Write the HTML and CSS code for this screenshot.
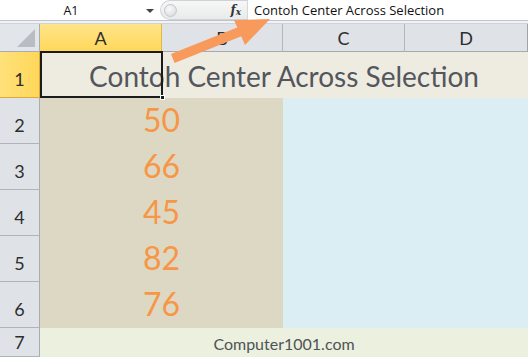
FILE: index.html
```html
<!DOCTYPE html>
<html>
<head>
<meta charset="utf-8">
<link rel="stylesheet" href="styles.css">
</head>
<body>
<div class="app">
  <div class="formula-bar">
    <div class="namebox">A1</div>
    <div class="dropdown"><span class="tri"></span></div>
    <div class="fx-area">
      <span class="knob"></span>
      <span class="fx">f<sub>x</sub></span>
    </div>
    <div class="formula-input">Contoh Center Across Selection</div>
  </div>
  <div class="bar-gap"></div>
  <div class="sheet">
    <div class="corner"><span class="corner-tri"></span></div>
    <div class="colhead sel">A</div>
    <div class="colhead">B</div>
    <div class="colhead">C</div>
    <div class="colhead last">D</div>

    <div class="rowhead sel r1">1</div>
    <div class="title">Contoh Center Across Selection</div>

    <div class="rowhead r2">2</div>
    <div class="num r2">50</div>
    <div class="rowhead r3">3</div>
    <div class="num r3">66</div>
    <div class="rowhead r4">4</div>
    <div class="num r4">45</div>
    <div class="rowhead r5">5</div>
    <div class="num r5">82</div>
    <div class="rowhead r6">6</div>
    <div class="num r6">76</div>
    <div class="blue"></div>

    <div class="rowhead r7">7</div>
    <div class="footer">Computer1001.com</div>

    <div class="selection"><span class="handle"></span></div>
  </div>
  <svg class="arrow" width="528" height="357" viewBox="0 0 528 357">
    <polygon points="171,54 241,26 244.5,35 174.5,63" fill="#f79a5c"/>
    <polygon points="270,19 234,20 245,45" fill="#f79a5c"/>
  </svg>
</div>
</body>
</html>
```
FILE: styles.css
```css
* { box-sizing: border-box; }
html, body { margin: 0; padding: 0; }
body { width: 528px; height: 357px; overflow: hidden; background: #fff; font-family: Lato, "Noto Sans", sans-serif; }
.app { position: relative; width: 528px; height: 357px; }

.formula-bar { display: flex; height: 20px; background: #fff; font-family: "Open Sans", "Noto Sans", sans-serif; font-size: 13px; color: #111; }
.namebox { width: 142px; display: flex; align-items: center; justify-content: center; font-size: 12.5px; }
.dropdown { width: 16px; display: flex; align-items: center; justify-content: center; }
.tri { width: 0; height: 0; border-left: 4px solid transparent; border-right: 4px solid transparent; border-top: 4px solid #444; margin-top: 1px; }
.fx-area { width: 87px; margin-left: 2px; display: flex; align-items: center; justify-content: space-between; background: linear-gradient(#f7f7f7, #e9eaeb); border: 1px solid #d0d3d6; border-right: none; border-radius: 10px 0 0 10px; padding: 0 6px 0 3px; }
.knob { width: 13px; height: 13px; border-radius: 50%; background: radial-gradient(circle at 40% 35%, #fafafa, #d4d6d8); border: 1px solid #c4c6c9; }
.fx { font-family: "DejaVu Serif", "Liberation Serif", serif; font-style: italic; font-weight: bold; font-size: 12px; color: #333; }
.fx sub { font-size: 9px; vertical-align: -1px; }
.formula-input { flex: 1; display: flex; align-items: center; padding-left: 6px; border-left: 1px solid #d5d8db; }

.bar-gap { height: 4px; border-top: 1px solid #bfc4ca; background: #f1f2f4; border-bottom: 1px solid #cfd3d8; }

.sheet { position: relative; display: grid; grid-template-columns: 40px 122px 121px 122px 123px; grid-template-rows: 28px repeat(6, 46px) 29px; }

.corner { background: #e2e5e9; border-right: 1px solid #a9adb2; border-bottom: 1px solid #a9adb2; position: relative; }
.corner-tri { position: absolute; right: 4px; bottom: 4px; width: 0; height: 0; border-left: 18px solid transparent; border-bottom: 18px solid #b8bdc3; }

.colhead { background: #dfe3e8; border-right: 1px solid #b3b7bc; border-bottom: 1px solid #a6aaaf; display: flex; align-items: center; justify-content: center; font-size: 18px; color: #2e2e2e; padding-top: 1px; }
.colhead.last { border-right: 1px solid #a0a4a9; }
.colhead.sel { background: linear-gradient(#ffe58a, #ffd75a); border-right: 1px solid #e3b64a; border-bottom: 1px solid #e0a93a; }

.rowhead { grid-column: 1; background: #dfe3e8; border-right: 1px solid #a9adb2; border-bottom: 1px solid #b0b4b9; display: flex; align-items: flex-end; justify-content: center; font-size: 18px; color: #2e2e2e; padding-bottom: 7px; }
.rowhead.sel { background: linear-gradient(90deg, #ffe17a, #ffd75a); border-right: 1px solid #d9a63a; border-bottom: 1px solid #e0a93a; }
.rowhead.r7 { padding-bottom: 3px; }

.r1 { grid-row: 2; }
.r2 { grid-row: 3; }
.r3 { grid-row: 4; }
.r4 { grid-row: 5; }
.r5 { grid-row: 6; }
.r6 { grid-row: 7; }
.r7 { grid-row: 8; }

.title { grid-column: 2 / span 4; grid-row: 2; background: #eeece1; display: flex; align-items: flex-end; justify-content: center; font-size: 28px; color: #53575d; padding-bottom: 5px; }

.num { grid-column: 2 / span 2; background: #ddd8c4; display: flex; align-items: flex-end; justify-content: center; font-size: 32px; color: #f79646; line-height: 1; padding-bottom: 8px; }

.blue { grid-column: 4 / span 2; grid-row: 3 / span 5; background: #daeef3; }

.footer { grid-column: 2 / span 4; grid-row: 8; background: #ebf1de; display: flex; align-items: flex-end; justify-content: center; font-size: 16px; color: #4f5358; padding-bottom: 4px; }

.selection { position: absolute; left: 40px; top: 27px; width: 123px; height: 47px; border: 2px solid #1b1b1b; pointer-events: none; }
.handle { position: absolute; right: -4px; bottom: -4px; width: 5px; height: 5px; background: #1b1b1b; border: 1px solid #fff; }

.arrow { position: absolute; left: 0; top: 0; pointer-events: none; }
```
